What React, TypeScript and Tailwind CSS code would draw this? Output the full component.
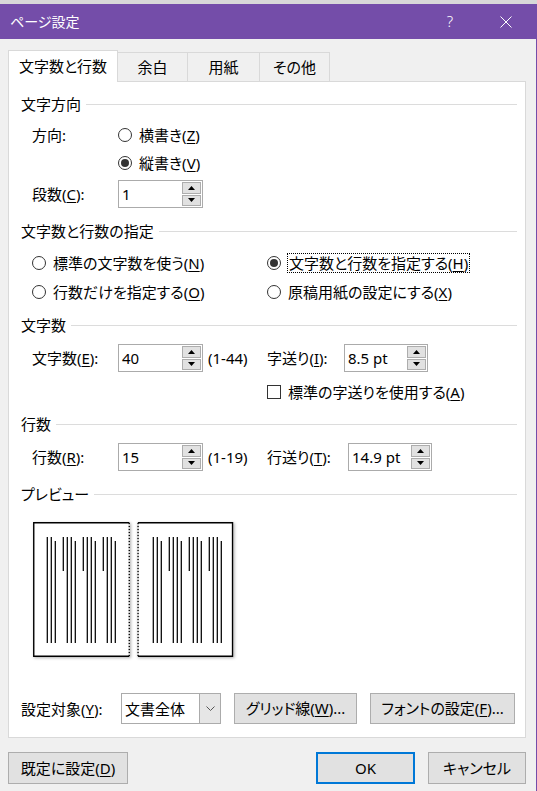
import React from "react";

const U = ({ children }: { children: React.ReactNode }) => (
  <span className="underline decoration-1 underline-offset-[2px]">{children}</span>
);

function Radio({
  checked = false,
  focus = false,
  children,
}: {
  checked?: boolean;
  focus?: boolean;
  children: React.ReactNode;
}) {
  return (
    <div className="flex h-[28px] items-center">
      <span className="flex h-[14px] w-[14px] shrink-0 items-center justify-center rounded-full border border-[#333333] bg-white">
        {checked && <span className="h-[8px] w-[8px] rounded-full bg-[#333333]" />}
      </span>
      {focus ? (
        <span className="ml-[6px] whitespace-nowrap border border-dotted border-black px-[1px] leading-[18px]">
          {children}
        </span>
      ) : (
        <span className="ml-[7px] whitespace-nowrap leading-[20px]">{children}</span>
      )}
    </div>
  );
}

function Arrow({ up }: { up: boolean }) {
  return (
    <svg width="7" height="4" viewBox="0 0 7 4">
      <path d={up ? "M0 4 L3.5 0 L7 4 Z" : "M0 0 L3.5 4 L7 0 Z"} fill="#000" />
    </svg>
  );
}

function Spin({ value, w }: { value: string; w: string }) {
  return (
    <div className={`flex h-[28px] shrink-0 border border-[#ABABAB] bg-white ${w}`}>
      <div className="flex flex-1 items-center pl-[3px] leading-[20px]">{value}</div>
      <div className="flex w-[20px] flex-col gap-[1px] py-[1px] pr-[1px]">
        <div className="flex flex-1 items-center justify-center border border-[#ADADAD] bg-[#E1E1E1]">
          <Arrow up />
        </div>
        <div className="flex flex-1 items-center justify-center border border-[#ADADAD] bg-[#E1E1E1]">
          <Arrow up={false} />
        </div>
      </div>
    </div>
  );
}

function Header({ children }: { children: React.ReactNode }) {
  return (
    <div className="flex h-[20px] items-center">
      <span className="whitespace-nowrap leading-[20px]">{children}</span>
      <div className="ml-[5px] h-px flex-1 bg-[#DCDCDC]" />
    </div>
  );
}

function Pages() {
  const xs1 = [14.3, 18.3, 22.3, 30.3, 34.3, 38.3, 42.3, 50.3, 54.3, 58.3, 62.3, 70.3, 74.3, 78.3, 82.3];
  const kinds = ["f", "f", "i", "s", "f", "f", "i", "s", "f", "f", "i", "s", "f", "f", "i"];
  const line = (x: number, k: string, key: string) => {
    const y1 = k === "i" ? 19 : 15;
    const y2 = k === "s" ? 49 : 121;
    return <line key={key} x1={x} y1={y1} x2={x} y2={y2} stroke="#000" strokeWidth="1.25" />;
  };
  return (
    <svg
      width="206"
      height="139"
      viewBox="0 0 206 139"
      className="[filter:drop-shadow(1px_1px_1.5px_rgba(0,0,0,0.3))]"
    >
      <rect x="0" y="0" width="97" height="135" fill="#fff" />
      <path d="M96.25 0.75 H0.75 V134.25 H96.25" stroke="#000" strokeWidth="1.4" fill="none" />
      <line x1="96.25" y1="0.75" x2="96.25" y2="134.25" stroke="#000" strokeWidth="1.4" strokeDasharray="1.5 1.5" />
      {xs1.map((x, i) => line(x, kinds[i], "a" + i))}
      <rect x="104.3" y="0" width="96" height="135" fill="#fff" />
      <path d="M105.05 0.75 H199.55 V134.25 H105.05" stroke="#000" strokeWidth="1.4" fill="none" />
      <line x1="105.05" y1="0.75" x2="105.05" y2="134.25" stroke="#000" strokeWidth="1.4" strokeDasharray="1.5 1.5" />
      {xs1.map((x, i) => line(x + 104.3 + 1.7, kinds[i], "b" + i))}
    </svg>
  );
}

export default function App() {
  return (
    <div className="h-[791px] w-[537px] overflow-hidden bg-[#F0F0F0] text-[15px] text-black [font-family:'Noto_Sans','Noto_Sans_CJK_JP',sans-serif] [font-feature-settings:'palt']">
      <div className="h-[4px] bg-[#d8d8d8]" />
      <div className="flex h-[787px] flex-col border-r border-[#744DA9]">
        {/* title bar */}
        <div className="flex h-[35px] shrink-0 items-center bg-[#744DA9] text-white">
          <span className="ml-[10px] text-[14px] leading-[20px]">ページ設定</span>
          <div className="ml-auto flex h-full items-center pr-[7px]">
            <div className="flex h-full w-[46px] items-center justify-center text-[15px] font-light">?</div>
            <div className="ml-[10px] flex h-full w-[46px] items-center justify-center">
              <svg width="12" height="12" viewBox="0 0 12 12">
                <path d="M0.5 0.5 L11.5 11.5 M11.5 0.5 L0.5 11.5" stroke="#fff" strokeWidth="1" fill="none" />
              </svg>
            </div>
          </div>
        </div>

        {/* body */}
        <div className="flex flex-1 flex-col pl-[8px] pr-[10px] pt-[11px]">
          {/* tabs */}
          <div className="flex h-[31px] items-end">
            <div className="relative z-10 -mb-px flex h-[32px] w-[110px] items-center justify-center border border-b-0 border-[#D9D9D9] bg-white">
              文字数と行数
            </div>
            <div className="-ml-px flex h-[29px] w-[71px] items-center justify-center border border-b-0 border-[#D9D9D9] bg-[#F0F0F0]">
              余白
            </div>
            <div className="-ml-px flex h-[29px] w-[73px] items-center justify-center border border-b-0 border-[#D9D9D9] bg-[#F0F0F0]">
              用紙
            </div>
            <div className="-ml-px flex h-[29px] w-[71px] items-center justify-center border border-b-0 border-[#D9D9D9] bg-[#F0F0F0]">
              その他
            </div>
          </div>

          {/* panel */}
          <div className="flex h-[657px] flex-col border border-[#D9D9D9] bg-white pb-[13px] pl-[12px] pr-[8px]">
            <div className="mt-[12px]">
              <Header>文字方向</Header>
            </div>
            <div className="mt-[7px] flex h-[28px] items-center pl-[11px]">
              <span className="w-[86px] leading-[20px]">方向:</span>
              <Radio>
                横書き(<U>Z</U>)
              </Radio>
            </div>
            <div className="flex h-[28px] items-center pl-[97px]">
              <Radio checked>
                縦書き(<U>V</U>)
              </Radio>
            </div>
            <div className="mt-[3px] flex h-[28px] items-center pl-[11px]">
              <span className="w-[86px] leading-[20px]">
                段数(<U>C</U>):
              </span>
              <Spin value="1" w="w-[85px]" />
            </div>

            <div className="mt-[13px]">
              <Header>文字数と行数の指定</Header>
            </div>
            <div className="mt-[8px] flex pl-[11px]">
              <div className="w-[235px]">
                <Radio>
                  標準の文字数を使う(<U>N</U>)
                </Radio>
              </div>
              <Radio checked focus>
                文字数と行数を指定する(<U>H</U>)
              </Radio>
            </div>
            <div className="mt-[1px] flex pl-[11px]">
              <div className="w-[235px]">
                <Radio>
                  行数だけを指定する(<U>O</U>)
                </Radio>
              </div>
              <Radio>
                原稿用紙の設定にする(<U>X</U>)
              </Radio>
            </div>

            <div className="mt-[9px]">
              <Header>文字数</Header>
            </div>
            <div className="mt-[9px] flex h-[28px] items-center pl-[11px]">
              <span className="w-[86px] leading-[20px]">
                文字数(<U>E</U>):
              </span>
              <Spin value="40" w="w-[85px]" />
              <span className="ml-[5px] w-[59px] leading-[20px]">(1-44)</span>
              <span className="w-[77px] whitespace-nowrap leading-[20px]">
                字送り(<U>I</U>):
              </span>
              <Spin value="8.5 pt" w="w-[84px]" />
            </div>
            <div className="mt-[6px] flex h-[28px] items-center pl-[246px]">
              <span className="h-[14px] w-[14px] shrink-0 border border-[#333333] bg-white" />
              <span className="ml-[7px] whitespace-nowrap leading-[20px]">
                標準の字送りを使用する(<U>A</U>)
              </span>
            </div>

            <div className="mt-[8px]">
              <Header>行数</Header>
            </div>
            <div className="mt-[9px] flex h-[28px] items-center pl-[11px]">
              <span className="w-[86px] leading-[20px]">
                行数(<U>R</U>):
              </span>
              <Spin value="15" w="w-[85px]" />
              <span className="ml-[5px] w-[59px] leading-[20px]">(1-19)</span>
              <span className="w-[81px] whitespace-nowrap leading-[20px]">
                行送り(<U>T</U>):
              </span>
              <Spin value="14.9 pt" w="w-[84px]" />
            </div>

            <div className="mt-[13px]">
              <Header>プレビュー</Header>
            </div>
            <div className="mt-[18px] pl-[12px]">
              <Pages />
            </div>

            <div className="mt-auto flex h-[31px] items-center">
              <span className="w-[100px] whitespace-nowrap leading-[20px]">
                設定対象(<U>Y</U>):
              </span>
              <div className="flex h-[31px] w-[100px] border border-[#ABABAB] bg-white">
                <div className="flex flex-1 items-center pl-[3px] leading-[20px]">文書全体</div>
                <div className="flex w-[21px] items-center justify-center border-l border-[#ABABAB] bg-[#E6E6E6]">
                  <svg width="9" height="5" viewBox="0 0 9 5">
                    <path d="M0.5 0.5 L4.5 4.5 L8.5 0.5" stroke="#555" strokeWidth="1" fill="none" />
                  </svg>
                </div>
              </div>
              <div className="ml-[13px] flex h-[31px] w-[123px] items-center justify-center border border-[#ADADAD] bg-[#E1E1E1] whitespace-nowrap">
                グリッド線(<U>W</U>)...
              </div>
              <div className="ml-[13px] flex h-[31px] w-[145px] items-center justify-center border border-[#ADADAD] bg-[#E1E1E1] whitespace-nowrap">
                フォントの設定(<U>F</U>)...
              </div>
            </div>
          </div>

          {/* footer */}
          <div className="mt-[14px] flex h-[32px] items-center">
            <div className="flex h-[32px] w-[120px] items-center justify-center border border-[#ADADAD] bg-[#E1E1E1] whitespace-nowrap">
              既定に設定(<U>D</U>)
            </div>
            <div className="ml-auto flex h-[32px] w-[99px] items-center justify-center border-2 border-[#0078D7] bg-[#E1E1E1]">
              OK
            </div>
            <div className="ml-[13px] flex h-[32px] w-[98px] items-center justify-center border border-[#ADADAD] bg-[#E1E1E1]">
              キャンセル
            </div>
          </div>
        </div>
      </div>
    </div>
  );
}
